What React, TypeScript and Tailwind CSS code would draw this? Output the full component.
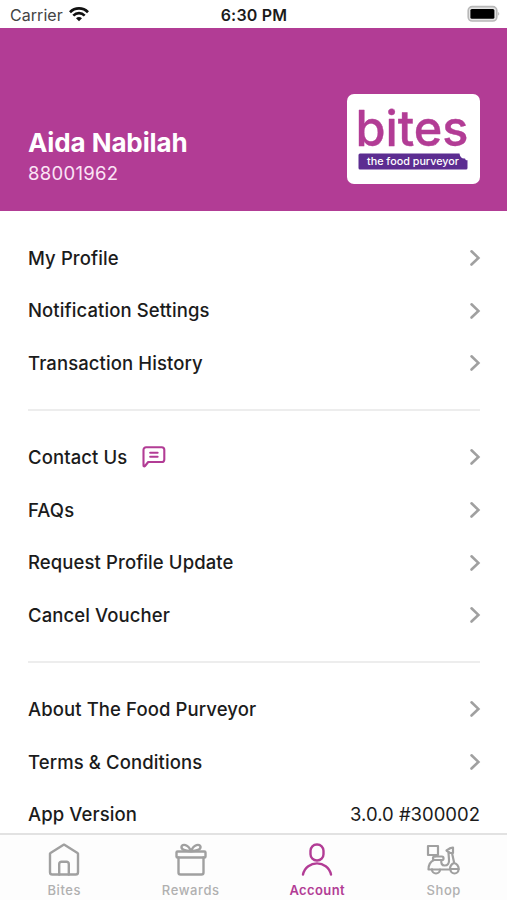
import type { ReactNode } from 'react';

interface IMenuRowProps {
  label: string;
  icon?: ReactNode;
  value?: string;
}

interface ITabProps {
  label: string;
  active?: boolean;
  children: ReactNode;
}

const WifiIcon = () => (
  <svg width="20" height="15" viewBox="0 0 20 15" fill="none" stroke="#111" strokeWidth="2.7">
    <path d="M1 5.2C6 .2 14 .2 19 5.2" />
    <path d="M4.3 8.6c3.3-3.2 8.1-3.2 11.4 0" />
    <path d="M10 14.2l-3-3c1.7-1.5 4.3-1.5 6 0z" fill="#111" stroke="none" />
  </svg>
);

const BatteryIcon = () => (
  <svg width="34" height="18" viewBox="0 0 34 18" fill="none">
    <rect x="1.2" y="1.6" width="28.6" height="14.4" rx="4" fill="#e4e4e4" stroke="#b8b8b8" strokeWidth="1.6" />
    <rect x="3.4" y="4" width="24" height="9.8" rx="1.5" fill="#000" />
    <path d="M31.2 7c1.4.4 1.4 3.2 0 3.6z" fill="#b8b8b8" />
  </svg>
);

const ChatIcon = () => (
  <svg
    width="24"
    height="22"
    viewBox="0 0 24 22"
    fill="none"
    stroke="#B23C95"
    strokeWidth="2.1"
    strokeLinecap="round"
    strokeLinejoin="round"
  >
    <path d="M1.5 19.4V3.8a2.600 2.600 0 0 1 2.600-2.600h15.600a2.600 2.600 0 0 1 2.600 2.600v9.600a2.600 2.600 0 0 1-2.600 2.600H6.200L3 20c-.7.700-1.500.300-1.500-.6z" />
    <path d="M8.200 6.800h7.400M8.200 10.800h7.400" />
  </svg>
);

const Chevron = () => (
  <svg
    className="mr-[-1px]"
    width="12"
    height="18"
    viewBox="0 0 12 18"
    fill="none"
    stroke="#A0A0A0"
    strokeWidth="2.6"
    strokeLinecap="round"
  >
    <path d="M2.5 2.300L9.400 8.900l-6.900 6.600" />
  </svg>
);

const Logo = () => (
  <svg
    width="133"
    height="90"
    viewBox="0 0 133 90"
    className="rounded-[7px] bg-white"
    fontFamily="Inter, sans-serif"
  >
    <text
      x="8.5"
      y="52"
      fontSize="50"
      fontWeight="500"
      fill="#B23C95"
      stroke="#B23C95"
      strokeWidth="0.4"
      strokeLinejoin="round"
      textLength="113"
      lengthAdjust="spacingAndGlyphs"
    >
      bites
    </text>
    <path
      d="M13 59.500h99.500c.3 3.500 2.700 5.500 5.500 5 .4 1.400 1.300 2 2.500 1.800v7.700a1.500 1.500 0 0 1-1.500 1.500H13a1.500 1.500 0 0 1-1.500-1.500V61a1.500 1.500 0 0 1 1.500-1.500z"
      fill="#5C2D91"
    />
    <text
      x="20"
      y="71"
      fontSize="10.5"
      fontWeight="500"
      fill="#fff"
      textLength="92"
      lengthAdjust="spacingAndGlyphs"
    >
      the food purveyor
    </text>
  </svg>
);

const MenuRow = ({ label, icon, value }: IMenuRowProps) => (
  <div className="h-[52.6px] flex justify-between items-center">
    <div className="flex items-center gap-[14.5px]">
      <p className="text-[18.5px] font-medium tracking-[0.1px] leading-none">{label}</p>
      {icon}
    </div>
    {value ? <p className="text-[18.5px] leading-none">{value}</p> : <Chevron />}
  </div>
);

const Divider = () => <div className="h-[2px] mt-[19.5px] mb-[20px] bg-[#EDEDED]" />;

const Tab = ({ label, active, children }: ITabProps) => (
  <div
    className={
      active
        ? 'flex-1 flex flex-col items-center text-[#B23C95]'
        : 'flex-1 flex flex-col items-center text-[#A0A0A0]'
    }
  >
    <svg
      width="36"
      height="36"
      viewBox="0 0 36 36"
      fill="none"
      stroke="currentColor"
      strokeWidth="2.4"
      strokeLinecap="round"
      strokeLinejoin="round"
    >
      {children}
    </svg>
    <p
      className={
        active
          ? 'mt-[5px] text-[13px] leading-4 font-semibold tracking-[0.4px]'
          : 'mt-[5px] text-[13px] leading-4 font-medium tracking-[0.6px] text-[#B0B0B0]'
      }
    >
      {label}
    </p>
  </div>
);

export default function App() {
  return (
    <div className="w-[507px] h-[900px] flex flex-col overflow-hidden bg-white font-['Inter',sans-serif] text-[#1B1B1B]">
      {/* Status bar */}
      <div className="h-[28px] shrink-0 grid grid-cols-3 items-center pl-[10px] pr-[6px]">
        <div className="flex items-center gap-1.5">
          <span className="pt-px text-[16px] tracking-[0.05px] text-[#444]">Carrier</span>
          <WifiIcon />
        </div>
        <span className="pt-px pr-[3px] text-center text-[16px] font-semibold tracking-[0.2px]">6:30 PM</span>
        <div className="flex justify-end">
          <BatteryIcon />
        </div>
      </div>

      {/* Profile header */}
      <div className="h-[183px] shrink-0 flex justify-between items-end pl-7 pr-[27px] pb-[27px] bg-[#B23C95]">
        <div className="text-white">
          <p className="text-[26px] font-bold leading-[32px] tracking-[-0.1px]">Aida Nabilah</p>
          <p className="text-[18.5px] leading-[22px] mt-[3px] tracking-[0.3px] text-[#FBE4F5]">88001962</p>
        </div>
        <Logo />
      </div>

      {/* Menu */}
      <div className="flex-1 min-h-0 overflow-hidden pt-[20.8px] pl-7 pr-[27px]">
        <MenuRow label="My Profile" />
        <MenuRow label="Notification Settings" />
        <MenuRow label="Transaction History" />
        <Divider />
        <MenuRow label="Contact Us" icon={<ChatIcon />} />
        <MenuRow label="FAQs" />
        <MenuRow label="Request Profile Update" />
        <MenuRow label="Cancel Voucher" />
        <Divider />
        <MenuRow label="About The Food Purveyor" />
        <MenuRow label="Terms & Conditions" />
        <MenuRow label="App Version" value="3.0.0 #300002" />
      </div>

      {/* Tab bar */}
      <div className="h-[67px] shrink-0 flex pt-[6px] pl-px border-t-2 border-[#E2E2E2] bg-[#FDFDFD]">
        <Tab label="Bites">
          <path d="M4.500 12L18 3.600 31.500 12l.5.500v18.700a2.300 2.300 0 0 1-2.300 2.300H6.300A2.300 2.300 0 0 1 4 31.200V12.500z" />
          <path d="M13.200 33.500V23a2.200 2.200 0 0 1 2.200-2.200h5.200a2.200 2.200 0 0 1 2.200 2.200v10.500" />
        </Tab>
        <Tab label="Rewards">
          <rect x="3.500" y="10.500" width="29" height="6" rx="1" />
          <path d="M5.500 16.500V31.500a2 2 0 0 0 2 2h21a2 2 0 0 0 2-2V16.500" />
          <path d="M18 10.200C15.500 3 9 2.500 8.500 5.800 8.200 8.500 12 10 18 10.200zM18 10.200C20.500 3 27 2.500 27.500 5.800 27.800 8.500 24 10 18 10.200z" />
        </Tab>
        <Tab label="Account" active>
          <rect x="11.500" y="3.500" width="13" height="16" rx="6.300" />
          <path d="M4 33.500C7.200 18.700 28.800 18.700 32 33.500" />
        </Tab>
        <Tab label="Shop">
          <g strokeWidth="2.2">
            <rect x="2" y="5" width="10" height="9" />
            <path d="M9 14v1.500" />
            <rect x="7" y="15.500" width="10.500" height="3.500" rx="1.500" />
            <path d="M8 19c-3.500 1.500-5.500 4.500-5.500 9.500h3.500" />
            <path d="M15.500 19c-.8 3 .3 5.500 3 5.500 3.500 0 4.800-2.500 4.500-6L22.500 12M26 12l2.200 10c2.700.8 4.300 2.800 4.600 6H24c0-3 1.500-5 4.200-6" />
            <path d="M20.500 9.500l4-2.500 2.500-.5V12h-3z" />
            <path d="M6 28.500h18" />
            <path d="M6 28.500a4 4 0 0 0 8 0M24.500 28.500a4 4 0 0 0 8 0" />
          </g>
        </Tab>
      </div>
    </div>
  );
}
